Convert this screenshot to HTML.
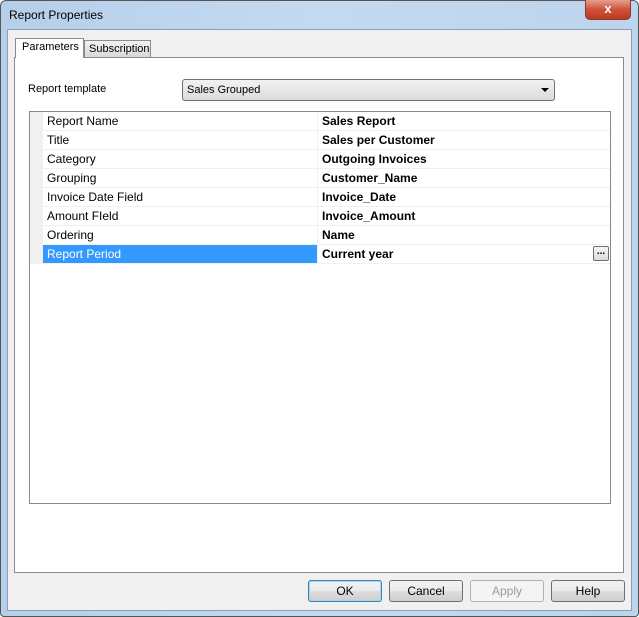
<!DOCTYPE html>
<html><head><style>
*{box-sizing:border-box;margin:0;padding:0}
body{width:639px;height:617px;position:relative;overflow:hidden;font-family:"Liberation Sans",sans-serif;font-size:12px;color:#000;background:#fff}
.frame{position:absolute;left:0;top:0;width:639px;height:617px;border:1px solid #555;border-radius:6px 6px 4px 4px;background:linear-gradient(90deg,#b5cfe9,#c4daf0 50%,#bcd4ec)}
.title{position:absolute;left:9px;top:8px;font-size:12px;color:#000}
.close{position:absolute;left:585px;top:0;width:46px;height:20px;border:1px solid #8a3a30;border-top:none;border-radius:0 0 5px 5px;background:linear-gradient(#e8a090,#d0503a 50%,#c03820);color:#fff;font-weight:bold;text-align:center;line-height:18px;font-size:13px}
.client{position:absolute;left:7px;top:29px;width:625px;height:582px;background:#f0f0f0;border:1px solid #8aa0b8}
.panel{position:absolute;left:14px;top:57px;width:610px;height:516px;background:#fff;border:1px solid #898c95}
.tab{position:absolute;font-size:11px;border:1px solid #898c95;border-bottom:none}
.t1{left:15px;top:38px;width:69px;height:20px;background:#fff;padding:2px 0 0 6px;z-index:2}
.t2{left:84px;top:40px;width:67px;height:17px;background:linear-gradient(#f2f2f2,#d8d8d8);padding:2px 0 0 4px}
.lbl{position:absolute;left:28px;top:83px;font-size:11px}
.combo{position:absolute;left:182px;top:79px;width:373px;height:22px;border:1px solid #707070;border-radius:3px;background:linear-gradient(#f2f2f2,#dcdcdc);font-size:11px;padding:4px 0 0 4px}
.arr{position:absolute;right:5px;top:8px;width:0;height:0;border-left:4px solid transparent;border-right:4px solid transparent;border-top:4px solid #000}
.grid{position:absolute;left:29px;top:111px;width:582px;height:393px;border:1px solid #828790;background:#fff}
.gut{position:absolute;left:0;top:0;width:13px;height:152px;background:#f0f0f0}
.row{position:absolute;left:13px;width:567px;height:19px;border-bottom:1px solid #f0f0f0}
.n{position:absolute;left:0;top:0;width:275px;height:18px;padding:2px 0 0 4px;border-right:1px solid #f0f0f0}
.v{position:absolute;left:276px;top:0;padding:2px 0 0 3px;font-weight:bold}
.sel .n{background:#3399ff;color:#fff}
.dots{position:absolute;width:16px;height:15px;border:1px solid #707070;border-radius:2px;background:linear-gradient(#f6f6f6,#dcdcdc);font-size:10px;font-weight:bold;text-align:center;line-height:10px}
.btn{position:absolute;top:580px;width:74px;height:22px;border:1px solid #707070;border-radius:3px;background:linear-gradient(#f2f2f2,#ebebeb 50%,#dddddd 50%,#cfcfcf);text-align:center;line-height:20px;font-size:12px}
.ok{border-color:#3c7fb1;box-shadow:inset 0 0 0 1px #a8d8f0}
.dis{color:#9a9a9a;border-color:#adb2b5;background:#f4f4f4}
</style></head><body>
<div class="frame"></div>
<div class="title">Report Properties</div>
<div class="close">x</div>
<div class="client"></div>
<div class="panel"></div>
<div class="tab t2">Subscription</div>
<div class="tab t1">Parameters</div>
<div class="lbl">Report template</div>
<div class="combo">Sales Grouped<div class="arr"></div></div>
<div class="grid">
<div class="gut"></div>
<div class="row" style="top:0"><div class="n">Report Name</div><div class="v">Sales Report</div></div>
<div class="row" style="top:19px"><div class="n">Title</div><div class="v">Sales per Customer</div></div>
<div class="row" style="top:38px"><div class="n">Category</div><div class="v">Outgoing Invoices</div></div>
<div class="row" style="top:57px"><div class="n">Grouping</div><div class="v">Customer_Name</div></div>
<div class="row" style="top:76px"><div class="n">Invoice Date Field</div><div class="v">Invoice_Date</div></div>
<div class="row" style="top:95px"><div class="n">Amount FIeld</div><div class="v">Invoice_Amount</div></div>
<div class="row" style="top:114px"><div class="n">Ordering</div><div class="v">Name</div></div>
<div class="row sel" style="top:133px"><div class="n">Report Period</div><div class="v">Current year</div></div>
</div>
<div class="dots" style="left:593px;top:246px">...</div>
<div class="btn ok" style="left:308px">OK</div>
<div class="btn" style="left:389px">Cancel</div>
<div class="btn dis" style="left:470px">Apply</div>
<div class="btn" style="left:551px">Help</div>
</body></html>
